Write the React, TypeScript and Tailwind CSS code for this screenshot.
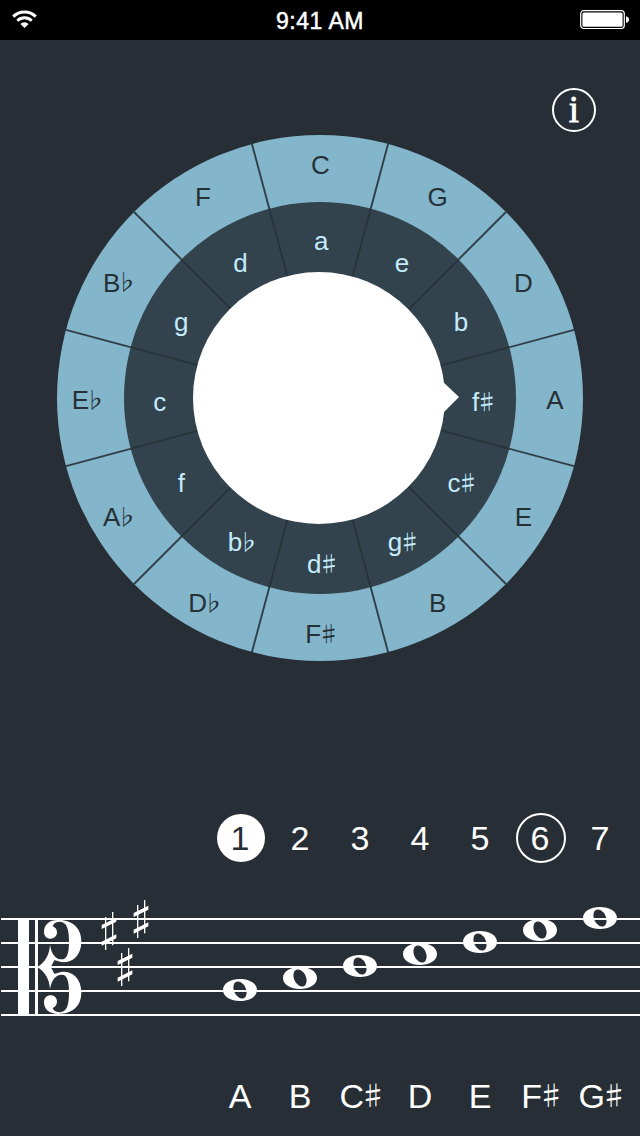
import clsx from "clsx";

const SANS = "font-['Liberation_Sans',Arial,sans-serif]";

const MAJOR_KEYS = ["C", "G", "D", "A", "E", "B", "F♯", "D♭", "A♭", "E♭", "B♭", "F"];
const MINOR_KEYS = ["a", "e", "b", "f♯", "c♯", "g♯", "d♯", "b♭", "f", "c", "g", "d"];
const SCALE = ["A", "B", "C♯", "D", "E", "F♯", "G♯"];

const StatusBar = () => (
  <header className="grid h-10 grid-cols-3 items-center bg-black text-white">
    <svg className="ml-3 -mt-px" width="26" height="19" viewBox="0 0 26 19" fill="none" stroke="#fff">
      <path d="M1.2 6.6a16 16 0 0 1 22.6 0" strokeWidth="3" />
      <path d="M5.3 10.7a10.3 10.3 0 0 1 14.4 0" strokeWidth="2.8" />
      <path d="M8.4 13.9a6.2 6.2 0 0 1 8.2 0l-4.1 4.2z" fill="#fff" stroke="none" />
    </svg>
    <span className="pt-[3px] text-center text-[23px] leading-none tracking-[0.5px] whitespace-nowrap [-webkit-text-stroke:0.5px_#fff]">
      9:41 AM
    </span>
    <svg className="mr-[10px] justify-self-end" width="50" height="20" viewBox="0 0 50 20">
      <rect x="0.7" y="0.7" width="43.6" height="17.8" rx="3" fill="none" stroke="#fff" strokeWidth="1.2" />
      <rect x="2.4" y="2.4" width="40.2" height="14.4" rx="1.5" fill="#fff" />
      <path d="M46 6.2c2 .3 3 1.6 3 3.4s-1 3.200-3 3.400z" fill="#fff" />
    </svg>
  </header>
);

const WheelLabel = ({ name, x, y, fill }: { name: string; x: number; y: number; fill: string }) => {
  const accidental = name.slice(1);
  const isFlat = accidental === "♭";
  return (
    <text x={x} y={y} fill={fill} fontSize="26" textAnchor="middle">
      {accidental ? <tspan letterSpacing={isFlat ? -5 : -3.5}>{name[0]}</tspan> : name}
      {accidental && (
        <tspan fontFamily="Noto Sans CJK JP" fontSize="22" letterSpacing={isFlat ? -6 : -4.5} dy="-1.2">
          {accidental}
        </tspan>
      )}
    </text>
  );
};

const KeyWheel = () => {
  const point = (index: number, radius: number) => {
    const angle = (index * Math.PI) / 6;
    return { x: radius * Math.sin(angle), y: -radius * Math.cos(angle) };
  };

  return (
    <svg className={clsx("mx-auto mt-[3px]", SANS)} width="526" height="526" viewBox="-263 -263 526 526">
      <circle r="263" fill="#83b5cb" />
      <circle r="196" fill="#32434d" />
      {MAJOR_KEYS.map((name, i) => {
        const from = point(i + 0.5, 120);
        const to = point(i + 0.5, 263);
        return (
          <line key={name} x1={from.x} y1={from.y} x2={to.x} y2={to.y} stroke="#283339" strokeWidth="1.9" opacity="0.9" />
        );
      })}
      <circle cx="-1" r="126" fill="#fff" />
      <path d="M122-17l17 16-17 17z" fill="#fff" />
      {MAJOR_KEYS.map((name, i) => {
        const { x, y } = point(i, 234.5);
        return <WheelLabel key={name} name={name} x={x + 0.3} y={y + 10.9} fill="#253137" />;
      })}
      {MINOR_KEYS.map((name, i) => {
        const { x, y } = point(i, 161.5);
        return <WheelLabel key={name} name={name} x={x + 1.2} y={y + 13.4} fill="#c4ebfb" />;
      })}
    </svg>
  );
};

const Degrees = () => (
  <div className="mt-[152px] ml-[210px] grid w-[420px] grid-cols-7 text-[34px] leading-none">
    {SCALE.map((_, i) => (
      <div key={i} className="flex h-[50px] items-center justify-center">
        <span
          className={clsx(
            "flex shrink-0 items-center justify-center rounded-full pb-px",
            i === 0 && "ml-0.5 size-12 bg-white pr-0.5 text-[#282e35]",
            i === 5 && "ml-0.5 size-[50px] border-2 border-white pr-0.5"
          )}
        >
          {i + 1}
        </span>
      </div>
    ))}
  </div>
);

const CLEF_HALF =
  "M112 231C135 216 148 196 150 164C154 192 167 208 185 208C201 208 207 190 207 155C207 115 200 96 180 95C169 95 161 99 158 108C166 112 171 118 171 127C171 138 163 146 152 146C141 146 132 139 132 125C132 104 148 90 174 90C216 90 244 112 244 155C244 200 212 220 184 216C174 215 168 210 163 211L152 232Z";

const Sharp = ({ x, y }: { x: number; y: number }) => (
  <g transform={`translate(${x} ${y})`}>
    <path d="M-12-42h4v99h-4zM9-57h4v100h-4z" />
    <path d="M-22-18L22-40v12L-22-6zM-22 32L22 10v12L-22 44z" />
  </g>
);

// Staff units are a third of a pixel, lines sit 72 units apart.
const Staff = () => (
  <svg className="mt-[27px] block" width="640" height="140" viewBox="0 0 1920 420" fill="#fff">
    {[84, 156, 228, 300, 372].map((y) => (
      <rect key={y} x="3" y={y} width="1917" height="6" />
    ))}
    <rect x="54" y="84" width="33" height="294" />
    <rect x="105" y="84" width="9" height="294" />
    <path d={CLEF_HALF} />
    <path d={CLEF_HALF} transform="translate(0 462) scale(1 -1)" />
    <Sharp x={327} y={123} />
    <Sharp x={423} y={87} />
    <Sharp x={375} y={231} />
    {SCALE.map((name, i) => (
      <path
        key={name}
        transform={`translate(${720 + i * 180} ${300 - i * 36})`}
        fillRule="evenodd"
        d="M-51 0C-51-20-28-33 0-33S51-20 51 0S28 33 0 33S-51 20-51 0ZM-11.4-24.500A18 27-25 0 1 11.4 24.500A18 27-25 0 1-11.4-24.500Z"
      />
    ))}
  </svg>
);

const NoteNames = () => (
  <div className="mt-[49px] ml-[210px] grid w-[420px] grid-cols-7 text-[34px] leading-[34px]">
    {SCALE.map((name) => (
      <span key={name} className="flex items-baseline justify-center whitespace-nowrap">
        {name[1] ? <span className="tracking-[-4.5px]">{name[0]}</span> : name}
        {name[1] && (
          <span className="-translate-y-0.5 font-['Noto_Sans_CJK_JP'] text-[27px] leading-none tracking-[-6px]">
            {name[1]}
          </span>
        )}
      </span>
    ))}
  </div>
);

export default function App() {
  return (
    <div className={clsx("flex h-[1136px] w-[640px] flex-col overflow-hidden bg-[#282e35] text-white", SANS)}>
      <StatusBar />
      <button className="mt-12 mr-11 flex size-11 items-center justify-center self-end rounded-full border-2 border-white pb-px font-['Liberation_Serif',serif] text-[37px] leading-none [-webkit-text-stroke:0.8px_#fff]">
        i
      </button>
      <KeyWheel />
      <Degrees />
      <Staff />
      <NoteNames />
    </div>
  );
}
